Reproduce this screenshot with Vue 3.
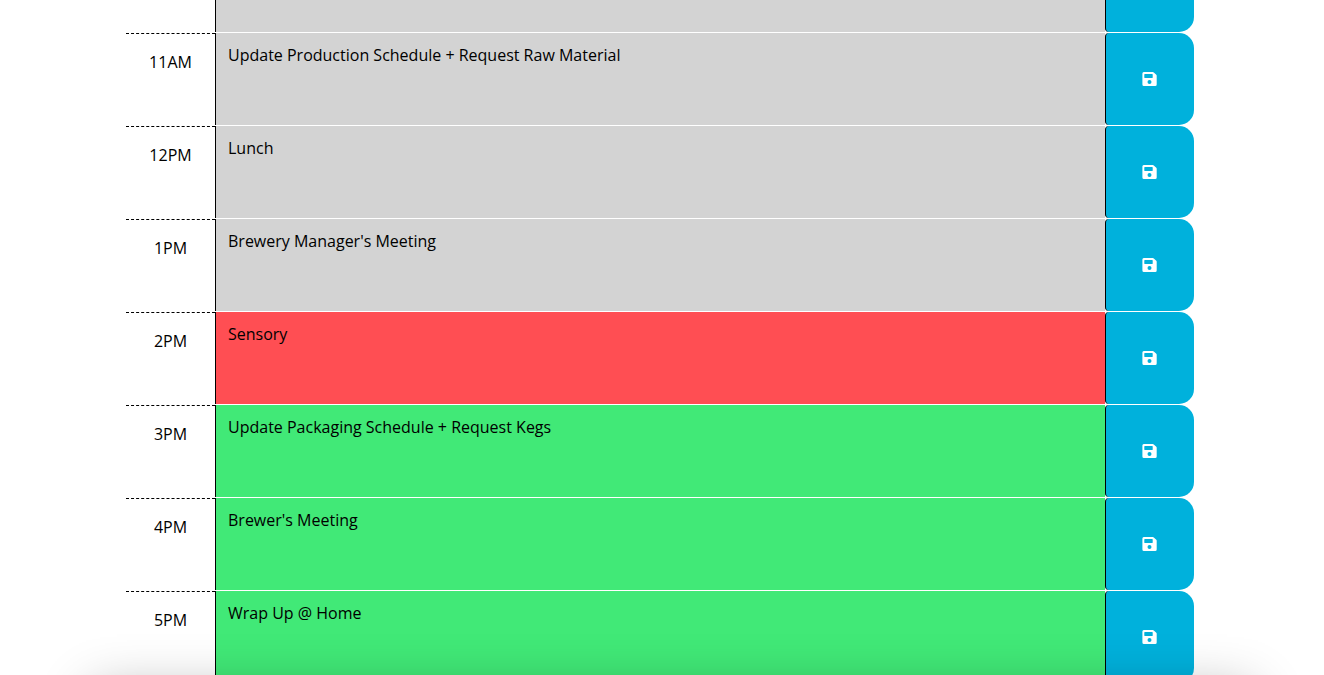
<script setup>
import { ref } from 'vue'

const blocks = ref([
  { id: 10, hour: '', state: 'past', task: '' },
  { id: 11, hour: '11AM', state: 'past', task: 'Update Production Schedule + Request Raw Material' },
  { id: 12, hour: '12PM', state: 'past', task: 'Lunch' },
  { id: 13, hour: '1PM', state: 'past', task: "Brewery Manager's Meeting" },
  { id: 14, hour: '2PM', state: 'present', task: 'Sensory' },
  { id: 15, hour: '3PM', state: 'future', task: 'Update Packaging Schedule + Request Kegs' },
  { id: 16, hour: '4PM', state: 'future', task: "Brewer's Meeting" },
  { id: 17, hour: '5PM', state: 'future', task: 'Wrap Up @ Home' }
])
</script>

<template>
  <div class="viewport">
    <main class="planner">
      <form v-for="b in blocks" :key="b.id" class="row" @submit.prevent>
        <label class="hour" :for="'task-' + b.id">{{ b.hour }}</label>
        <textarea :id="'task-' + b.id" v-model="b.task" class="task" :class="b.state"></textarea>
        <button class="save" type="submit" aria-label="Save">
          <svg viewBox="0 0 16 14" width="16" height="14" aria-hidden="true">
            <path
              fill="currentColor"
              fill-rule="evenodd"
              d="M1.8 0H10.8Q11.4 0 11.8.4L14.3 2.8Q14.7 3.2 14.7 3.8V12.5Q14.7 14 13.2 14H1.9Q.4 14 .4 12.5V1.5Q.4 0 1.8 0ZM2.3 2.4V5.6Q2.3 6 2.7 6H10.3Q10.7 6 10.7 5.6V2.4Q10.7 2 10.3 2H2.7Q2.3 2 2.3 2.4ZM7.5 7.9A2 2 0 1 0 7.5 11.9A2 2 0 1 0 7.5 7.9Z"
            />
          </svg>
        </button>
      </form>
    </main>
    <div class="shade" aria-hidden="true"></div>
  </div>
</template>

<style>
body {
  margin: 0;
  background: #fff;
}
</style>

<style scoped>
.viewport {
  position: relative;
  display: flex;
  flex-direction: column;
  justify-content: flex-end;
  height: 100vh;
  overflow: hidden;
  font: 16px/24px "Open Sans", "Noto Sans", sans-serif;
  color: #000;
}

.planner {
  flex: none;
  margin: 0 130px -8px 126px;
}

.row {
  display: grid;
  grid-template-columns: 1fr 10fr 1fr;
  height: 92px;
  border-top: 1px solid #fff;
}

.hour {
  padding-top: 16px;
  border-top: 1px dashed #000;
  text-align: center;
}

.task {
  box-sizing: border-box;
  width: 100%;
  height: 100%;
  margin: 0;
  padding: 10px 12px;
  border: 0;
  border-left: 1px solid #000;
  border-radius: 0;
  outline: 0;
  resize: none;
  overflow: hidden;
  font: inherit;
  color: inherit;
}

.past {
  background: #d3d3d3;
}

.present {
  background: #ff4e53;
}

.future {
  background: #41e977;
}

.save {
  display: flex;
  align-items: center;
  justify-content: center;
  padding: 0;
  border: 0;
  border-left: 1px solid #000;
  border-radius: 4px 15px 15px 4px;
  background: #00b1dc;
  color: #fff;
  cursor: pointer;
}

.shade {
  position: absolute;
  top: 100%;
  left: 92px;
  right: 72px;
  height: 200px;
  box-shadow: 0 16px 50px rgba(0, 0, 0, 0.3);
  pointer-events: none;
}
</style>
